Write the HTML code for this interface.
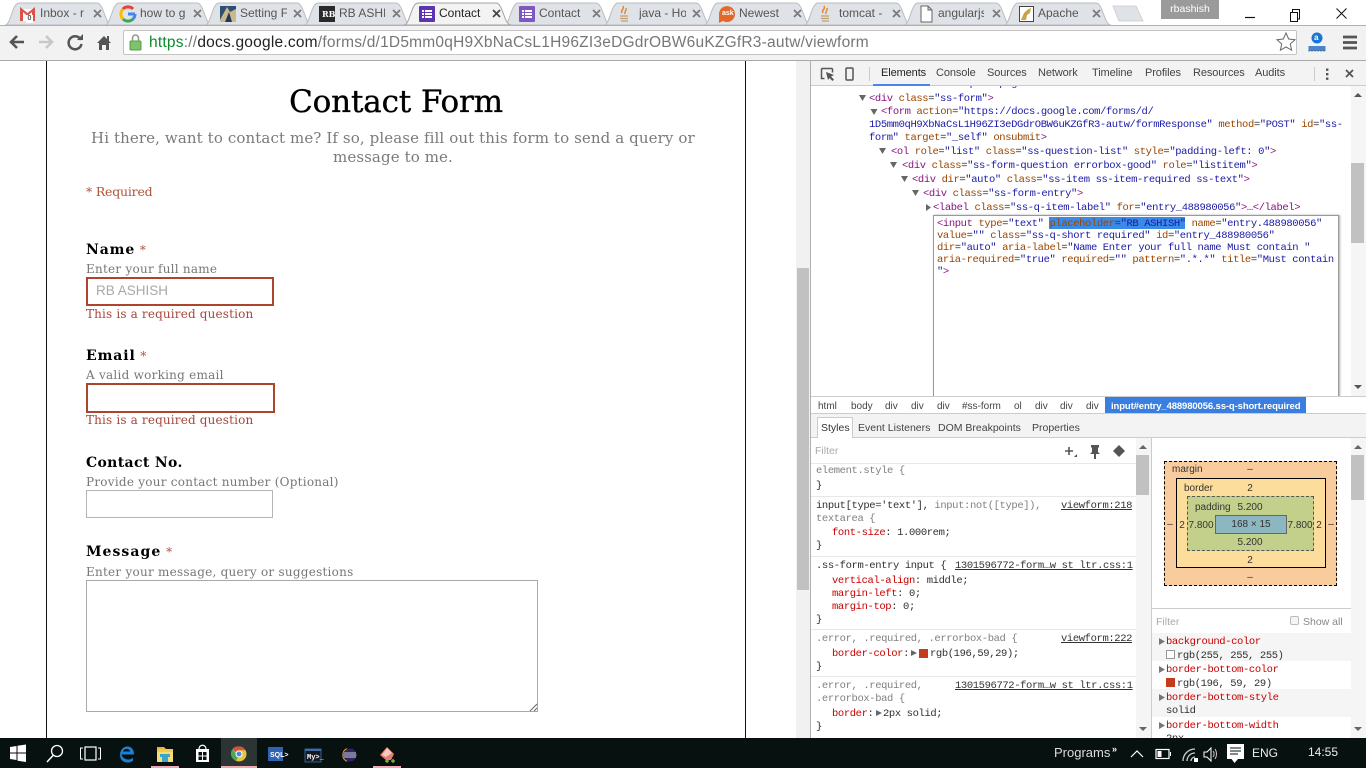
<!DOCTYPE html>
<html><head><meta charset="utf-8"><style>
html,body{margin:0;padding:0;width:1366px;height:768px;overflow:hidden;background:#fff}
body{position:relative;font-family:"Liberation Sans",sans-serif}
.b{position:absolute}
.t{position:absolute;white-space:nowrap;line-height:14px;height:14px}
.tab{font-size:12px;color:#555;overflow:hidden}
.dt{font-size:11px;color:#444;letter-spacing:-.1px}
.m{font:10.5px/13px "Liberation Mono",monospace;letter-spacing:-.38px;position:absolute;white-space:pre;color:#303030;height:13px}
.p{color:#881280}.n{color:#994500}.v{color:#1a1aa6}.g{color:#808080}.r{color:#c80000}.u{text-decoration:underline;color:#333}
.s{font-family:"DejaVu Serif","Liberation Serif",serif}
.h{font-size:12px;color:#777;letter-spacing:.25px}
.l{font-size:14px;font-weight:bold;color:#000;letter-spacing:.35px}
.e{font-size:12px;color:#a8453a;letter-spacing:.16px}
.st{color:#b0533a;font-size:12px}
.bx{font-size:10px;color:#333;text-align:center;transform:translateX(-50%)}
</style></head><body>

<!-- tab strip -->
<svg class="b" style="left:0;top:0" width="1160" height="26">
<g fill="#dfe2e6" stroke="#b8bcc0">
<path d="M5 25C11 25 12 3 19 3H97C104 3 105 25 112 25Z"/>
<path d="M105 25C111 25 112 3 119 3H197C204 3 205 25 212 25Z"/>
<path d="M205 25C211 25 212 3 219 3H297C304 3 305 25 312 25Z"/>
<path d="M304 25C310 25 311 3 318 3H396C403 3 404 25 411 25Z"/>
<path d="M504 25C510 25 511 3 518 3H596C603 3 604 25 611 25Z"/>
<path d="M604 25C610 25 611 3 618 3H696C703 3 704 25 711 25Z"/>
<path d="M704 25C710 25 711 3 718 3H796C803 3 804 25 811 25Z"/>
<path d="M804 25C810 25 811 3 818 3H896C903 3 904 25 911 25Z"/>
<path d="M904 25C910 25 911 3 918 3H996C1003 3 1004 25 1011 25Z"/>
<path d="M1004 25C1010 25 1011 3 1018 3H1096C1103 3 1104 25 1111 25Z"/>
<path fill="#dfe2e6" stroke="#d0d3d6" d="M1113 6H1136L1143 21H1119Z"/>
<path fill="#f3f3f3" stroke="#a0a0a0" d="M404 25C410 25 411 3 418 3H496C503 3 504 25 511 25Z"/>
</g>
<!-- favicons -->
<path d="M20 9h15v12h-15z" fill="#fff"/><path d="M20 21V7l7.500 6L35 7v14h-3V12l-4.500 4L23 12v9z" fill="#d9534a"/>
<path d="M135 14a7 7 0 0 1-2 5" stroke="#4285f4" stroke-width="3" fill="none"/><path d="M133 19a7 7 0 0 1-10 0" stroke="#34a853" stroke-width="3" fill="none"/><path d="M123 19a7 7 0 0 1 0-10" stroke="#fbbc05" stroke-width="3" fill="none"/><path d="M123 9a7 7 0 0 1 10 0" stroke="#ea4335" stroke-width="3" fill="none"/><path d="M128 14h7" stroke="#4285f4" stroke-width="3"/>
<rect x="220" y="6" width="16" height="16" fill="#2f4f72"/><path d="M220 20l7-13 3 5 6-3v13h-16z" fill="#c9b98c"/><path d="M225 22l4-10 3 10z" fill="#1f3a5c"/>
<rect x="319" y="6" width="16" height="16" fill="#2a2a2a"/>
<rect x="419" y="6" width="16" height="16" rx="1" fill="#5e35b1"/><path d="M422 10h2v2h-2zM425 10h7v2h-7zM422 13h2v2h-2zM425 13h7v2h-7zM422 16h2v2h-2zM425 16h7v2h-7z" fill="#fff"/>
<rect x="519" y="6" width="16" height="16" rx="1" fill="#7e57c2"/><path d="M522 10h2v2h-2zM525 10h7v2h-7zM522 13h2v2h-2zM525 13h7v2h-7zM522 16h2v2h-2zM525 16h7v2h-7z" fill="#fff"/>
<path d="M623 6c2 3-3 4-1 7M626 8c1 3-2 3-1 6" stroke="#e8862e" stroke-width="1.500" fill="none"/><path d="M620 16h8M620 18.500h8M621 21h7" stroke="#c0a070" stroke-width="1.200"/>
<path d="M719 14a8 8 0 1 1 4 7l-4 2z" fill="#e2682c"/>
<path d="M824 6c2 3-3 4-1 7M827 8c1 3-2 3-1 6" stroke="#e8862e" stroke-width="1.500" fill="none"/><path d="M821 16h8M821 18.500h8M822 21h7" stroke="#c0a070" stroke-width="1.200"/>
<path d="M921 6h7l4 4v12h-11zM928 6v4h4" fill="#fff" stroke="#666"/>
<rect x="1019.500" y="6.500" width="14" height="15" fill="#fff" stroke="#444"/><path d="M1021 20l3-7 3-3 4-2-1 5-3 2-1 5z" fill="#c9a24a"/>
<!-- close x -->
<g stroke="#777" stroke-width="1.700">
<path d="M94 10l7 7M101 10l-7 7M194 10l7 7M201 10l-7 7M294 10l7 7M301 10l-7 7M393 10l7 7M400 10l-7 7M593 10l7 7M600 10l-7 7M693 10l7 7M700 10l-7 7M794 10l7 7M801 10l-7 7M893 10l7 7M900 10l-7 7M993 10l7 7M1000 10l-7 7M1093 10l7 7M1100 10l-7 7"/>
<path stroke="#444" d="M493 10l7 7M500 10l-7 7"/>
</g>
</svg>
<div class="t" style="left:26px;top:15px;width:7px;height:8px;background:#fff;font-size:7px;line-height:8px;color:#000;text-align:center">0</div>
<div class="t" style="left:322px;top:6px;font-size:8px;font-weight:bold;color:#fff;font-family:'DejaVu Serif',serif;line-height:16px;height:16px">RB</div>
<div class="t" style="left:722px;top:7px;font-size:7px;font-weight:bold;color:#fff">ask</div>
<div class="t tab" style="left:40px;top:6px;width:47px">Inbox - r</div>
<div class="t tab" style="left:140px;top:6px;width:47px">how to g</div>
<div class="t tab" style="left:240px;top:6px;width:47px">Setting F</div>
<div class="t tab" style="left:339px;top:6px;width:46px">RB ASHIS</div>
<div class="t tab" style="left:439px;top:6px;width:42px;color:#222">Contact</div>
<div class="t tab" style="left:539px;top:6px;width:42px">Contact</div>
<div class="t tab" style="left:639px;top:6px;width:47px">java - Ho</div>
<div class="t tab" style="left:739px;top:6px;width:44px">Newest</div>
<div class="t tab" style="left:839px;top:6px;width:45px">tomcat -</div>
<div class="t tab" style="left:938px;top:6px;width:46px">angularjs</div>
<div class="t tab" style="left:1038px;top:6px;width:40px">Apache</div>
<div class="b" style="left:1161px;top:0;width:58px;height:19px;background:#9a9a9a;color:#fff;font-size:10.500px;line-height:19px;text-align:center">rbashish</div>
<svg class="b" style="left:1240px;top:0" width="126" height="26"><path d="M5 17.500h10" stroke="#111" stroke-width="1.200"/><path d="M50.500 12.500h7v9h-7zM52.500 12V9.500h7V19h-2" fill="none" stroke="#111"/><path d="M96.500 8.500l10 10M106.500 8.500l-10 10" stroke="#111"/></svg>

<!-- toolbar -->
<div class="b" style="left:0;top:25px;width:1366px;height:35px;background:#f2f2f2;border-top:1px solid #b0b0b0;box-sizing:border-box"></div>
<div class="b" style="left:0;top:60px;width:1366px;height:1px;background:#a8a8a8"></div>
<div class="b" style="left:123px;top:30px;width:1174px;height:25px;background:#fff;border:1px solid #c4c4c4;box-sizing:border-box;border-radius:2px"></div>
<svg class="b" style="left:0;top:25px" width="160" height="35">
<path d="M24 17H12M17 11l-6 6 6 6" fill="none" stroke="#555" stroke-width="2.600"/>
<path d="M39 17h12M46 11l6 6-6 6" fill="none" stroke="#c8c8c8" stroke-width="2.600"/>
<path d="M81 15a6.500 6.500 0 1 0 .5 4" fill="none" stroke="#555" stroke-width="2.500"/><path d="M77 15h6v-6z" fill="#555"/>
<path d="M97 18l7-7 3 3v-3h2v5l2 2h-2v7h-3v-5h-4v5h-3v-7z" fill="#555"/>
<rect x="130" y="16" width="11" height="9" rx="1" fill="#7cc36a" stroke="#5a9a4a"/><path d="M132.500 16v-3a3 3 0 0 1 6 0v3" fill="none" stroke="#8a9a85" stroke-width="1.500"/>
</svg>
<div class="t" style="left:149px;top:34px;height:18px;line-height:18px;font-size:15.5px;letter-spacing:.22px;color:#777"><span style="color:#0b8a2e">https</span>://<span style="color:#222">docs.google.com</span>/forms/d/1D5mm0qH9XbNaCsL1H96ZI3eDGdrOBW6uKZGfR3-autw/viewform</div>
<svg class="b" style="left:1270px;top:25px" width="96" height="35">
<path d="M16 8l2.700 6 6.300.7-4.700 4.200 1.300 6.300-5.600-3.200-5.600 3.200 1.300-6.300L7 14.700l6.300-.7z" fill="#fff" stroke="#666"/>
<circle cx="47" cy="13" r="5.500" fill="#1976d2"/><path d="M38.500 21h17v5h-17z" fill="#4a86c8"/><path d="M38.500 26h17" stroke="#333" stroke-dasharray="1 2"/>
<path d="M73 12h14M73 17.500h14M73 23h14" stroke="#555" stroke-width="2.800"/>
</svg>
<div class="t" style="left:1314px;top:31px;font-size:8px;font-weight:bold;color:#fff">a</div>

<!-- page pane -->
<div class="b" style="left:46px;top:61px;width:1px;height:677px;background:#111"></div>
<div class="b" style="left:745px;top:61px;width:1px;height:677px;background:#111"></div>
<div class="b" style="left:796px;top:61px;width:14px;height:677px;background:#f1f1f1"></div>
<div class="b" style="left:797px;top:268px;width:12px;height:322px;background:#c1c1c1"></div>

<div class="t s" style="left:259px;top:84px;width:274px;height:36px;line-height:36px;font-size:31px;color:#000;letter-spacing:-.15px;text-align:center;-webkit-text-stroke:.35px #000">Contact Form</div>
<div class="t s" style="left:91px;top:129px;height:18px;line-height:18px;font-size:15px;color:#7a7a7a;letter-spacing:.11px">Hi there, want to contact me? If so, please fill out this form to send a query or</div>
<div class="t s" style="left:333px;top:148px;height:18px;line-height:18px;font-size:15px;color:#7a7a7a;letter-spacing:.11px">message to me.</div>
<div class="t s" style="left:86px;top:185px;font-size:12.500px;color:#b0533a;letter-spacing:-.2px">* Required</div>

<div class="t s l" style="left:86px;top:243px;letter-spacing:.9px">Name<span class="st" style="font-weight:normal"> *</span></div>
<div class="t s h" style="left:86px;top:262px">Enter your full name</div>
<div class="b" style="left:86px;top:277px;width:188px;height:29px;border:2px solid #ac452b;box-sizing:border-box"></div>
<div class="t" style="left:96px;top:284px;font-size:13.5px;color:#a9a9a9">RB ASHISH</div>
<div class="t s e" style="left:86px;top:307px">This is a required question</div>

<div class="t s l" style="left:86px;top:349px;letter-spacing:.9px">Email<span class="st" style="font-weight:normal"> *</span></div>
<div class="t s h" style="left:86px;top:368px">A valid working email</div>
<div class="b" style="left:86px;top:383px;width:189px;height:30px;border:2px solid #ac452b;box-sizing:border-box"></div>
<div class="t s e" style="left:86px;top:413px">This is a required question</div>

<div class="t s l" style="left:86px;top:456px">Contact No.</div>
<div class="t s h" style="left:86px;top:475px">Provide your contact number (Optional)</div>
<div class="b" style="left:86px;top:490px;width:187px;height:28px;border:1px solid #b5b5b5;box-sizing:border-box"></div>

<div class="t s l" style="left:86px;top:545px;letter-spacing:1.05px">Message<span class="st" style="font-weight:normal"> *</span></div>
<div class="t s h" style="left:86px;top:565px">Enter your message, query or suggestions</div>
<div class="b" style="left:86px;top:580px;width:452px;height:132px;border:1px solid #a9a9a9;box-sizing:border-box"></div>
<svg class="b" style="left:528px;top:702px" width="10" height="10"><path d="M2 9l7-7M6 9l3-3" stroke="#666"/></svg>

<!-- devtools -->
<div class="b" style="left:810px;top:61px;width:556px;height:677px;background:#fff;border-left:1px solid #b0b0b0;box-sizing:border-box"></div>
<div class="b" style="left:811px;top:61px;width:555px;height:25px;background:#f3f3f3;border-bottom:1px solid #ccc;box-sizing:border-box"></div>
<svg class="b" style="left:811px;top:61px" width="555" height="25">
<path d="M10.500 7.500h11M10.500 7.500v10h3M21.500 7.500v4" fill="none" stroke="#555" stroke-width="1.500"/><path d="M15 11l8 3-3 1.500 3 3-1.500 1.500-3-3L17 19z" fill="#555"/>
<rect x="35" y="7" width="7" height="12" rx="1" fill="none" stroke="#555" stroke-width="1.500"/>
<path d="M58.500 6v14M503.500 6v14" stroke="#ccc"/>
<path d="M515 7.500h2.400v2.400H515zM515 12h2.400v2.400H515zM515 16.500h2.400v2.400H515z" fill="#555"/>
<path d="M535 9l7 7M542 9l-7 7" stroke="#555" stroke-width="1.800"/>
</svg>
<div class="b" style="left:873px;top:84px;width:57px;height:2px;background:#4c84e8"></div>
<div class="t dt" style="left:881px;top:66px;color:#222">Elements</div>
<div class="t dt" style="left:936px;top:66px">Console</div>
<div class="t dt" style="left:987px;top:66px">Sources</div>
<div class="t dt" style="left:1038px;top:66px">Network</div>
<div class="t dt" style="left:1092px;top:66px">Timeline</div>
<div class="t dt" style="left:1145px;top:66px">Profiles</div>
<div class="t dt" style="left:1193px;top:66px">Resources</div>
<div class="t dt" style="left:1255px;top:66px">Audits</div>

<!-- tree -->
<div class="b" style="left:811px;top:86px;width:540px;height:5px;overflow:hidden"><div class="m" style="left:58px;top:-8px"><span class="p">&lt;div</span> <span class="n">class</span>=<span class="v">"ss-top-of-page"</span><span class="p">&gt;</span>…<span class="p">&lt;/div&gt;</span></div></div>
<svg class="b" style="left:850px;top:88px" width="90" height="130"><g fill="#666"><path d="M9 7h7l-3.500 6z"/><path d="M20.500 21h7l-3.500 6z"/><path d="M29 60h7l-3.500 6z"/><path d="M40 74h7l-3.500 6z"/><path d="M51 88h7l-3.500 6z"/><path d="M62 102h7l-3.500 6z"/><path d="M76 116v7l5-3.500z"/></g></svg>
<div class="m" style="left:869px;top:93px"><span class="p">&lt;div</span> <span class="n">class</span>=<span class="v">"ss-form"</span><span class="p">&gt;</span></div>
<div class="m" style="left:881px;top:106px"><span class="p">&lt;form</span> <span class="n">action</span>=<span class="v">"https://docs.google.com/forms/d/</span></div>
<div class="m" style="left:869px;top:119px"><span class="v">1D5mm0qH9XbNaCsL1H96ZI3eDGdrOBW6uKZGfR3-autw/formResponse"</span> <span class="n">method</span>=<span class="v">"POST"</span> <span class="n">id</span>=<span class="v">"ss-</span></div>
<div class="m" style="left:869px;top:132px"><span class="v">form"</span> <span class="n">target</span>=<span class="v">"_self"</span> <span class="n">onsubmit</span><span class="p">&gt;</span></div>
<div class="m" style="left:891px;top:146px"><span class="p">&lt;ol</span> <span class="n">role</span>=<span class="v">"list"</span> <span class="n">class</span>=<span class="v">"ss-question-list"</span> <span class="n">style</span>=<span class="v">"padding-left: 0"</span><span class="p">&gt;</span></div>
<div class="m" style="left:902px;top:160px"><span class="p">&lt;div</span> <span class="n">class</span>=<span class="v">"ss-form-question errorbox-good"</span> <span class="n">role</span>=<span class="v">"listitem"</span><span class="p">&gt;</span></div>
<div class="m" style="left:912px;top:174px"><span class="p">&lt;div</span> <span class="n">dir</span>=<span class="v">"auto"</span> <span class="n">class</span>=<span class="v">"ss-item ss-item-required ss-text"</span><span class="p">&gt;</span></div>
<div class="m" style="left:923px;top:188px"><span class="p">&lt;div</span> <span class="n">class</span>=<span class="v">"ss-form-entry"</span><span class="p">&gt;</span></div>
<div class="m" style="left:933px;top:202px"><span class="p">&lt;label</span> <span class="n">class</span>=<span class="v">"ss-q-item-label"</span> <span class="n">for</span>=<span class="v">"entry_488980056"</span><span class="p">&gt;</span>…<span class="p">&lt;/label&gt;</span></div>
<div class="b" style="left:933px;top:215px;width:406px;height:182px;border:1px solid #999;border-bottom:0;box-sizing:border-box;box-shadow:1px 0 2px #aaa"></div>
<div class="b" style="left:1049px;top:217px;width:136px;height:12px;background:#3a8ae8"></div>
<div class="m" style="left:937px;top:218px"><span class="p">&lt;input</span> <span class="n">type</span>=<span class="v">"text"</span> <span class="n">placeholder</span>=<span class="v">"RB ASHISH"</span> <span class="n">name</span>=<span class="v">"entry.488980056"</span></div>
<div class="m" style="left:937px;top:230px"><span class="n">value</span>=<span class="v">""</span> <span class="n">class</span>=<span class="v">"ss-q-short required"</span> <span class="n">id</span>=<span class="v">"entry_488980056"</span></div>
<div class="m" style="left:937px;top:242px"><span class="n">dir</span>=<span class="v">"auto"</span> <span class="n">aria-label</span>=<span class="v">"Name Enter your full name Must contain "</span></div>
<div class="m" style="left:937px;top:254px"><span class="n">aria-required</span>=<span class="v">"true"</span> <span class="n">required</span>=<span class="v">""</span> <span class="n">pattern</span>=<span class="v">".*.*"</span> <span class="n">title</span>=<span class="v">"Must contain</span></div>
<div class="m" style="left:937px;top:266px"><span class="v">"</span><span class="p">&gt;</span></div>
<div class="b" style="left:1351px;top:86px;width:15px;height:311px;background:#f5f5f5"></div>
<div class="b" style="left:1351px;top:163px;width:13px;height:80px;background:#c1c1c1"></div>
<svg class="b" style="left:1351px;top:88px" width="15" height="306"><path d="M3 9l4-4 4 4zM3 297l4 4 4-4z" fill="#555"/></svg>

<!-- breadcrumbs -->
<div class="b" style="left:811px;top:396px;width:555px;height:18px;background:#fff;border-top:1px solid #ccc;border-bottom:1px solid #ccc;box-sizing:border-box"></div>
<div class="b" style="left:1105px;top:397px;width:201px;height:16px;background:#3a7fe0"></div>
<div class="t" style="left:818px;top:400px;font-size:10px;color:#444">html</div>
<div class="t" style="left:851px;top:400px;font-size:10px;color:#444">body</div>
<div class="t" style="left:885px;top:400px;font-size:10px;color:#444">div</div>
<div class="t" style="left:911px;top:400px;font-size:10px;color:#444">div</div>
<div class="t" style="left:937px;top:400px;font-size:10px;color:#444">div</div>
<div class="t" style="left:962px;top:400px;font-size:10px;color:#444">#ss-form</div>
<div class="t" style="left:1014px;top:400px;font-size:10px;color:#444">ol</div>
<div class="t" style="left:1035px;top:400px;font-size:10px;color:#444">div</div>
<div class="t" style="left:1060px;top:400px;font-size:10px;color:#444">div</div>
<div class="t" style="left:1086px;top:400px;font-size:10px;color:#444">div</div>
<div class="t" style="left:1111px;top:400px;font-size:9.500px;letter-spacing:-.12px;color:#fff;font-weight:bold">input#entry_488980056.ss-q-short.required</div>

<!-- sidebar tabs -->
<div class="b" style="left:811px;top:414px;width:555px;height:24px;background:#f3f3f3;border-bottom:1px solid #ccc;box-sizing:border-box"></div>
<div class="b" style="left:817px;top:417px;width:36px;height:21px;background:#fff;border:1px solid #ccc;border-bottom:0;box-sizing:border-box"></div>
<div class="t" style="left:821px;top:421px;font-size:10.500px;color:#333">Styles</div>
<div class="t" style="left:858px;top:421px;font-size:10.500px;color:#444">Event Listeners</div>
<div class="t" style="left:938px;top:421px;font-size:10.500px;color:#444">DOM Breakpoints</div>
<div class="t" style="left:1032px;top:421px;font-size:10.500px;color:#444">Properties</div>

<!-- styles pane -->
<div class="t" style="left:815px;top:444px;font-size:10.500px;color:#aaa">Filter</div>
<svg class="b" style="left:1060px;top:442px" width="70" height="18"><path d="M5 9h8M9 5v8" stroke="#555" stroke-width="1.600"/><path d="M14 15l3-3v3z" fill="#555"/><path d="M31 3h8v2l-1 1v4l2 2h-4v5h-2v-5h-4l2-2V6l-1-1z" fill="#555"/><path d="M59 3l6 6-6 6-6-6z" fill="#555"/></svg>
<div class="b" style="left:811px;top:463px;width:325px;height:1px;background:#e8e8e8"></div>
<div class="b" style="left:811px;top:496px;width:325px;height:1px;background:#e8e8e8"></div>
<div class="b" style="left:811px;top:556px;width:325px;height:1px;background:#e8e8e8"></div>
<div class="b" style="left:811px;top:629px;width:325px;height:1px;background:#e8e8e8"></div>
<div class="b" style="left:811px;top:676px;width:325px;height:1px;background:#e8e8e8"></div>
<div class="m g" style="left:816px;top:465px">element.style {</div>
<div class="m" style="left:816px;top:480px">}</div>
<div class="m" style="left:816px;top:500px">input[type='text'], <span class="g">input:not([type]),</span></div>
<div class="m u" style="left:1061px;top:500px">viewform:218</div>
<div class="m g" style="left:816px;top:513px">textarea {</div>
<div class="m" style="left:832px;top:527px"><span class="r">font-size</span>: 1.000rem;</div>
<div class="m" style="left:816px;top:540px">}</div>
<div class="m" style="left:816px;top:560px">.ss-form-entry input {</div>
<div class="m u" style="left:955px;top:560px">1301596772-form…w st ltr.css:1</div>
<div class="m" style="left:832px;top:575px"><span class="r">vertical-align</span>: middle;</div>
<div class="m" style="left:832px;top:588px"><span class="r">margin-left</span>: 0;</div>
<div class="m" style="left:832px;top:601px"><span class="r">margin-top</span>: 0;</div>
<div class="m" style="left:816px;top:614px">}</div>
<div class="m g" style="left:816px;top:633px">.error, .required, .errorbox-bad {</div>
<div class="m u" style="left:1061px;top:633px">viewform:222</div>
<div class="m" style="left:832px;top:648px"><span class="r">border-color</span>:</div>
<div class="b" style="left:911px;top:650px;width:0;height:0;border-left:6px solid #666;border-top:3.500px solid transparent;border-bottom:3.500px solid transparent"></div>
<div class="b" style="left:919px;top:649px;width:9px;height:9px;background:#c43b1d"></div>
<div class="m" style="left:930px;top:648px">rgb(196,59,29);</div>
<div class="m" style="left:816px;top:661px">}</div>
<div class="m g" style="left:816px;top:680px">.error, .required,</div>
<div class="m u" style="left:955px;top:680px">1301596772-form…w st ltr.css:1</div>
<div class="m g" style="left:816px;top:693px">.errorbox-bad {</div>
<div class="m" style="left:832px;top:708px"><span class="r">border</span>:</div>
<div class="b" style="left:876px;top:710px;width:0;height:0;border-left:6px solid #666;border-top:3.500px solid transparent;border-bottom:3.500px solid transparent"></div>
<div class="m" style="left:883px;top:708px">2px solid;</div>
<div class="m" style="left:816px;top:721px">}</div>
<div class="b" style="left:1136px;top:438px;width:15px;height:300px;background:#f5f5f5"></div>
<div class="b" style="left:1136px;top:455px;width:13px;height:40px;background:#c1c1c1"></div>
<svg class="b" style="left:1136px;top:440px" width="15" height="296"><path d="M3 9l4-4 4 4zM3 287l4 4 4-4z" fill="#666"/></svg>
<div class="b" style="left:1151px;top:438px;width:1px;height:300px;background:#ccc"></div>

<!-- box model -->
<div class="b" style="left:1164px;top:461px;width:173px;height:125px;background:#f9cc9d;border:1px dashed #000;box-sizing:border-box"></div>
<div class="b" style="left:1176px;top:478px;width:150px;height:90px;background:#fddd9b;border:1px solid #000;box-sizing:border-box"></div>
<div class="b" style="left:1187px;top:496px;width:127px;height:55px;background:#c3d08b;border:1px dashed #555;box-sizing:border-box"></div>
<div class="b" style="left:1215px;top:515px;width:72px;height:19px;background:#8cb6c0;border:1px solid #666;box-sizing:border-box"></div>
<div class="t" style="left:1172px;top:463px;font-size:10px;color:#333">margin</div>
<div class="t bx" style="left:1250px;top:463px">–</div>
<div class="t" style="left:1184px;top:482px;font-size:10px;color:#333">border</div>
<div class="t bx" style="left:1250px;top:482px">2</div>
<div class="t" style="left:1195px;top:501px;font-size:10px;color:#333">padding</div>
<div class="t bx" style="left:1250px;top:501px">5.200</div>
<div class="t bx" style="left:1201px;top:519px">7.800</div>
<div class="t bx" style="left:1251px;top:518px">168 × 15</div>
<div class="t bx" style="left:1300px;top:519px">7.800</div>
<div class="t bx" style="left:1250px;top:536px">5.200</div>
<div class="t bx" style="left:1250px;top:554px">2</div>
<div class="t bx" style="left:1250px;top:571px">–</div>
<div class="t bx" style="left:1170px;top:518px">–</div>
<div class="t bx" style="left:1182px;top:519px">2</div>
<div class="t bx" style="left:1319px;top:519px">2</div>
<div class="t bx" style="left:1331px;top:518px">–</div>

<div class="b" style="left:1152px;top:608px;width:199px;height:1px;background:#ccc"></div>
<div class="t" style="left:1156px;top:615px;font-size:10.500px;color:#aaa">Filter</div>
<div class="b" style="left:1290px;top:616px;width:9px;height:9px;background:#f5f5f5;border:1px solid #bbb;border-radius:2px;box-sizing:border-box"></div>
<div class="t" style="left:1303px;top:615px;font-size:10.500px;color:#888">Show all</div>
<div class="b" style="left:1152px;top:633px;width:199px;height:28px;background:#f5f5f5"></div>
<div class="b" style="left:1152px;top:689px;width:199px;height:28px;background:#f5f5f5"></div>
<svg class="b" style="left:1158px;top:636px" width="8" height="100"><path d="M1 2v7l6-3.500zM1 30v7l6-3.500zM1 58v7l6-3.500zM1 86v7l6-3.500z" fill="#777"/></svg>
<div class="m r" style="left:1166px;top:636px">background-color</div>
<div class="b" style="left:1166px;top:650px;width:9px;height:9px;background:#fff;border:1px solid #999;box-sizing:border-box"></div>
<div class="m" style="left:1177px;top:650px">rgb(255, 255, 255)</div>
<div class="m r" style="left:1166px;top:664px">border-bottom-color</div>
<div class="b" style="left:1166px;top:678px;width:9px;height:9px;background:#c43b1d"></div>
<div class="m" style="left:1177px;top:678px">rgb(196, 59, 29)</div>
<div class="m r" style="left:1166px;top:692px">border-bottom-style</div>
<div class="m" style="left:1166px;top:705px">solid</div>
<div class="m r" style="left:1166px;top:720px">border-bottom-width</div>
<div class="m" style="left:1166px;top:733px">2px</div>
<div class="b" style="left:1351px;top:438px;width:15px;height:300px;background:#f5f5f5"></div>
<div class="b" style="left:1351px;top:455px;width:13px;height:45px;background:#c1c1c1"></div>
<svg class="b" style="left:1351px;top:440px" width="15" height="296"><path d="M3 9l4-4 4 4zM3 287l4 4 4-4z" fill="#666"/></svg>

<!-- taskbar -->
<div class="b" style="left:0;top:738px;width:1366px;height:30px;background:#07110f"></div>
<div class="b" style="left:221px;top:738px;width:36px;height:30px;background:#2b3533"></div>
<div class="b" style="left:151px;top:766px;width:28px;height:2px;background:#f0a8b4"></div>
<div class="b" style="left:221px;top:766px;width:36px;height:2px;background:#f0a8b4"></div>
<div class="b" style="left:373px;top:766px;width:28px;height:2px;background:#f0a8b4"></div>
<svg class="b" style="left:0;top:738px" width="420" height="30">
<path d="M10 9l6.500-1v6.500H10zM17.500 7.800L26 6.500v8h-8.500zM10 15.500h6.500V22L10 21zM17.500 15.500H26V24l-8.500-1.300z" fill="#fff"/>
<circle cx="57" cy="13" r="5.500" fill="none" stroke="#fff" stroke-width="1.300"/><path d="M53 17.500l-6 6.500" stroke="#fff" stroke-width="1.500"/>
<rect x="85" y="9" width="11" height="13" fill="none" stroke="#fff" stroke-width="1.200"/><path d="M83 10h-2.500v11H83M98 10h2.500v11H98" fill="none" stroke="#fff"/>
<path d="M121.500 16.500h12.500c0-5-2.500-8-6.500-8-4.500 0-7.500 3.800-7.500 8.500 0 4.700 3.300 7.500 7.500 7.500 2.300 0 4-.6 5.500-1.800v-3c-1.500 1.200-3 1.800-4.800 1.800-2.700 0-5.800-1.500-6.700-5zM123 13.500c.5-1.700 2-2.500 3.800-2.500 1.800 0 3 .9 3.300 2.500z" fill="#1c7fd6"/>
<path d="M157 11h16v3h-16z" fill="#f3c94f"/><path d="M157 9h7l2 2h-9z" fill="#e4b53a"/><path d="M157 14h16v10h-16z" fill="#f7dc78"/><path d="M162 19h6v5h-6z" fill="#3aa7c9"/><path d="M160 16h10v3h-10z" fill="#3aa7c9"/>
<path d="M196 11h13v13h-13z" fill="#fff"/><path d="M199 11c0-5 7-5 7 0" fill="none" stroke="#fff" stroke-width="1.200"/><path d="M198.500 14h3.500v3.500h-3.500zM203 14h3.500v3.500H203zM198.500 18.500h3.500V22h-3.500zM203 18.500h3.500V22H203z" fill="#07110f"/>
<circle cx="239" cy="16" r="7.500" fill="#e8c33e"/><path d="M239 8.500a7.500 7.500 0 0 1 6.500 3.800h-6.500a3.700 3.700 0 0 0-3.300 2l-3.200-3.400a7.500 7.500 0 0 1 6.500-2.400z" fill="#d9503f"/><path d="M232.500 11a7.500 7.500 0 0 0 3.500 11.800l3-5.300-3-1.500z" fill="#4aa853"/><circle cx="239" cy="16" r="3" fill="#4a8ae0" stroke="#fff"/>
<rect x="268" y="9" width="15" height="14" fill="#2f63b0"/>
<rect x="305" y="11" width="16" height="13" fill="#111a24" stroke="#3a5c88"/><path d="M305 11h16v2h-16z" fill="#3c6ea8"/>
<circle cx="350" cy="17" r="6.500" fill="#2c2560"/><path d="M344 15h12M343.500 17h13M344 19h12" stroke="#fff" stroke-width=".8"/><path d="M347 10.600a7 7 0 0 0 0 12.800" fill="none" stroke="#f0a030"/>
<path d="M380 17l7-8 7 7-3 6h-5z" fill="#e87c70"/><path d="M382 17l5-7 5 5-6 4z" fill="#f5c8c0"/><path d="M385 23h4M387 21v4M391 23h4M393 21v4" stroke="#8ac840" stroke-width="1.200"/>
</svg>
<div class="t" style="left:270px;top:749px;font-size:7px;font-weight:bold;color:#fff">SQL&gt;</div>
<div class="t" style="left:307px;top:751px;font-size:7px;font-weight:bold;color:#fff;font-family:'Liberation Mono',monospace">My&gt;_</div>
<div class="t" style="left:1054px;top:746px;font-size:13px;color:#ddd">Programs</div>
<div class="t" style="left:1112px;top:742px;font-size:9px;color:#fff;font-weight:bold">»</div>
<svg class="b" style="left:1125px;top:738px" width="110" height="30">
<path d="M6 19l6-6 6 6" fill="none" stroke="#fff" stroke-width="1.200"/>
<rect x="31" y="11.500" width="13" height="9" fill="none" stroke="#fff" stroke-width="1.200"/><path d="M33 13.500h3v5h-3zM45.500 14v4" fill="#fff" stroke="#fff"/>
<path d="M58 23a12 12 0 0 1 12-12M62 23a8 8 0 0 1 8-8M66 23a4 4 0 0 1 4-4" fill="none" stroke="#ccc" stroke-width="1.300"/><path d="M69 20h4v4h-4z" fill="#fff"/>
<path d="M79 14v5h3l4 4V10l-4 4z" fill="none" stroke="#fff"/><path d="M88 13c1.500 2 1.500 4 0 6M90 11c2 3 2 7 0 10" fill="none" stroke="#ccc"/>
</svg>
<svg class="b" style="left:1225px;top:738px" width="24" height="30"><path d="M2 6h17v15h-6l-3.500 4-3-4H2z" fill="#fff"/><path d="M5 10h11M5 13h11M5 16h8" stroke="#07110f" stroke-width="1.100"/></svg>
<div class="t" style="left:1252px;top:746px;font-size:12px;color:#eee">ENG</div>
<div class="t" style="left:1308px;top:745px;font-size:12px;color:#eee">14:55</div>
</body></html>
